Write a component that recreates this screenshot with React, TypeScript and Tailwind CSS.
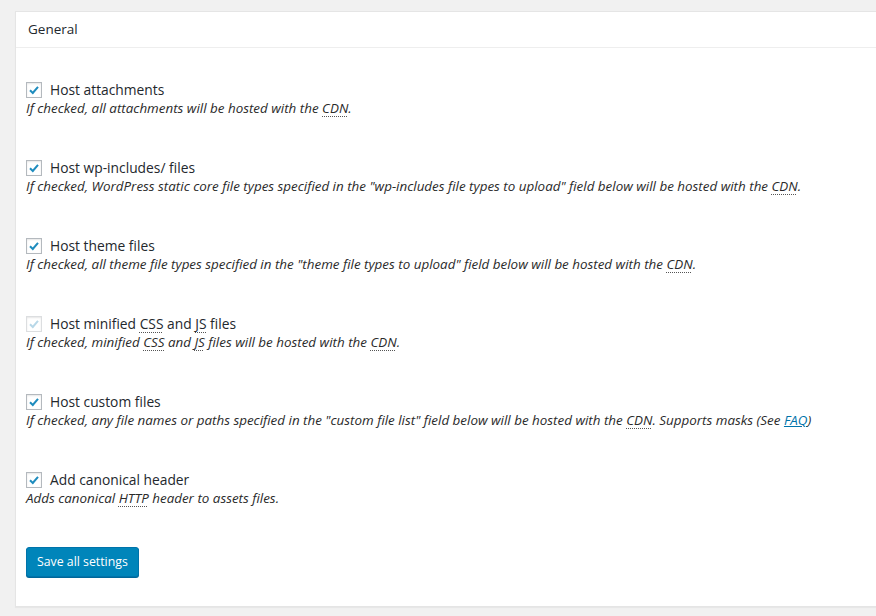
import React from "react";

const font = { fontFamily: '"Open Sans", "Noto Sans", sans-serif' };

function Abbr({ children }: { children: React.ReactNode }) {
  return (
    <span className="underline decoration-dotted decoration-[1px] underline-offset-[3px] decoration-[#555]">
      {children}
    </span>
  );
}

function Check({ disabled }: { disabled?: boolean }) {
  return (
    <span
      className={`inline-flex items-center justify-center w-[16px] h-[16px] border bg-white shrink-0 shadow-[inset_0_1px_2px_rgba(0,0,0,0.1)] ${
        disabled ? "border-[#dcdee0]" : "border-[#b4b9be]"
      }`}
    >
      <svg width="12" height="12" viewBox="0 0 12 12">
        <path
          d="M2 6.2 L4.8 9 L10 2.8"
          fill="none"
          stroke={disabled ? "#b8d8e8" : "#1e8cbe"}
          strokeWidth="2"
        />
      </svg>
    </span>
  );
}

function Item({
  label,
  desc,
  disabled,
}: {
  label: React.ReactNode;
  desc: React.ReactNode;
  disabled?: boolean;
}) {
  return (
    <div className="flex flex-col">
      <div className="flex items-center h-[18px] gap-[8px]">
        <Check disabled={disabled} />
        <span className="text-[13.8px] text-[#23282d]">{label}</span>
      </div>
      <div className="h-[18px] leading-[18px] text-[13.4px] italic text-[#2a2a2a]">{desc}</div>
    </div>
  );
}

export default function App() {
  return (
    <div className="w-[876px] h-[616px] bg-[#f1f1f1] overflow-hidden pt-[11px] pl-[15px]" style={font}>
      <div className="w-[900px] bg-white border border-[#e5e5e5] shadow-[0_1px_1px_rgba(0,0,0,0.04)]">
        <div className="h-[36px] flex items-center px-[12px] border-b border-[#eeeeee] text-[13.5px] text-[#23282d]">
          General
        </div>
        <div className="pt-[33px] pb-[29px] px-[10px]">
          <div className="flex flex-col gap-[42px]">
            <Item
              label="Host attachments"
              desc={
                <>
                  If checked, all attachments will be hosted with the <Abbr>CDN</Abbr>.
                </>
              }
            />
            <Item
              label="Host wp-includes/ files"
              desc={
                <>
                  If checked, WordPress static core file types specified in the "wp-includes file types to upload" field below will be hosted with the <Abbr>CDN</Abbr>.
                </>
              }
            />
            <Item
              label="Host theme files"
              desc={
                <>
                  If checked, all theme file types specified in the "theme file types to upload" field below will be hosted with the <Abbr>CDN</Abbr>.
                </>
              }
            />
            <Item
              disabled
              label={
                <>
                  Host minified <Abbr>CSS</Abbr> and <Abbr>JS</Abbr> files
                </>
              }
              desc={
                <>
                  If checked, minified <Abbr>CSS</Abbr> and <Abbr>JS</Abbr> files will be hosted with the <Abbr>CDN</Abbr>.
                </>
              }
            />
            <Item
              label="Host custom files"
              desc={
                <>
                  If checked, any file names or paths specified in the "custom file list" field below will be hosted with the <Abbr>CDN</Abbr>. Supports masks (See{" "}
                  <span className="underline text-[#0073aa]">FAQ</span>)
                </>
              }
            />
            <Item
              label="Add canonical header"
              desc={
                <>
                  Adds canonical <Abbr>HTTP</Abbr> header to assets files.
                </>
              }
            />
          </div>
          <div className="mt-[40px]">
            <button className="h-[30px] px-[10px] rounded-[3px] bg-[#0085ba] border border-[#0073aa] text-white text-[12.3px] shadow-[0_1px_0_#006799]">
              Save all settings
            </button>
          </div>
        </div>
      </div>
    </div>
  );
}
